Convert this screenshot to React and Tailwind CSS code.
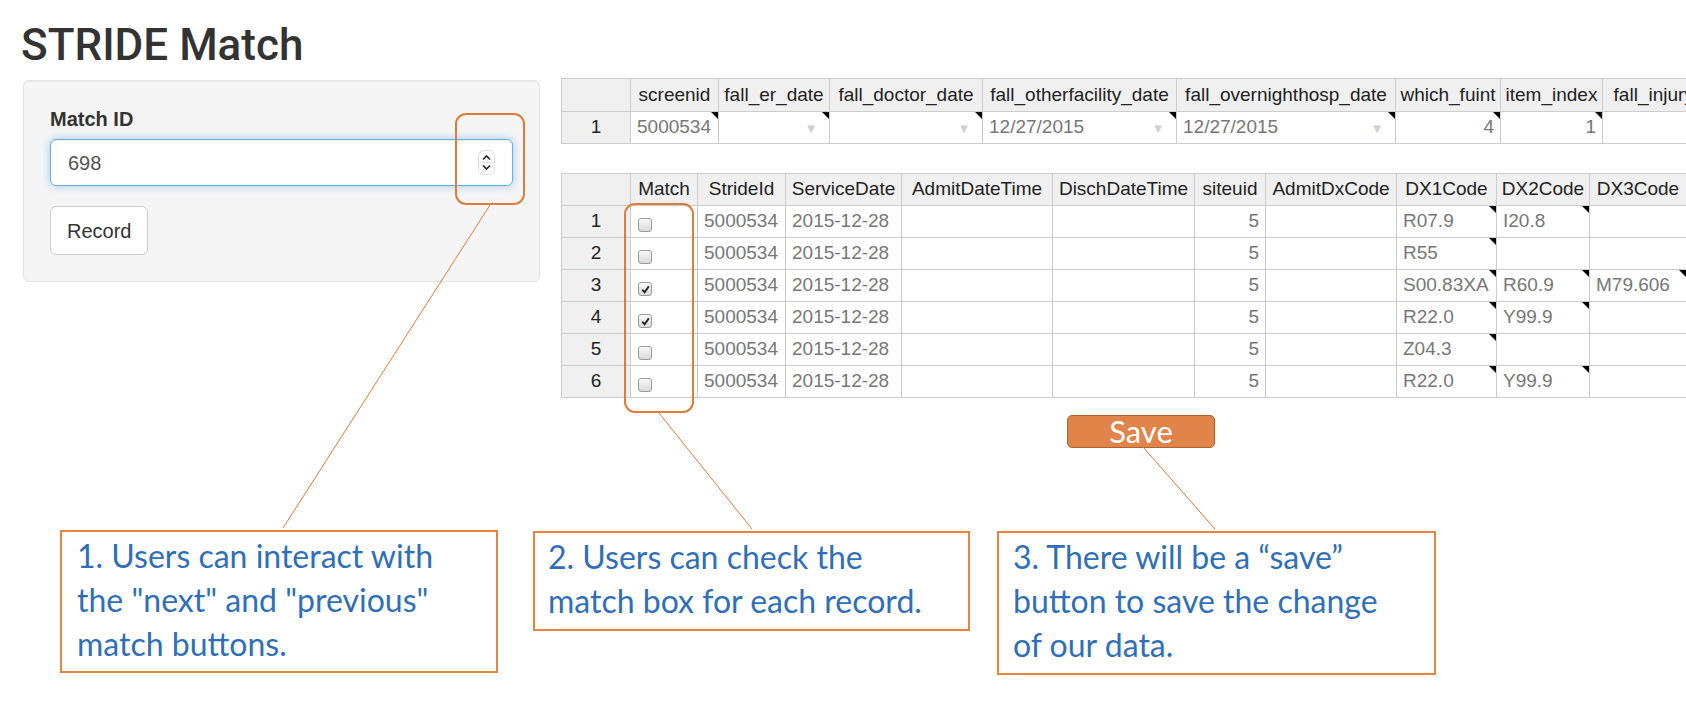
import React from "react";

const topCols = [
  { label: "", w: "w-[69px]" },
  { label: "screenid", w: "w-[88px]" },
  { label: "fall_er_date", w: "w-[111px]" },
  { label: "fall_doctor_date", w: "w-[153px]" },
  { label: "fall_otherfacility_date", w: "w-[194px]" },
  { label: "fall_overnighthosp_date", w: "w-[219px]" },
  { label: "which_fuint", w: "w-[105px]" },
  { label: "item_index", w: "w-[102px]" },
  { label: "fall_injury_date", w: "w-[150px]" },
];

const topRow = [
  { v: "5000534", comment: true },
  { v: "", comment: true, arrow: true },
  { v: "", comment: true, arrow: true },
  { v: "12/27/2015", comment: true, arrow: true },
  { v: "12/27/2015", comment: true, arrow: true },
  { v: "4", comment: true, right: true },
  { v: "1", comment: true, right: true },
  { v: "" },
];

const matchCols = [
  { label: "", w: "w-[69px]" },
  { label: "Match", w: "w-[67px]" },
  { label: "StrideId", w: "w-[88px]" },
  { label: "ServiceDate", w: "w-[116px]" },
  { label: "AdmitDateTime", w: "w-[151px]" },
  { label: "DischDateTime", w: "w-[142px]" },
  { label: "siteuid", w: "w-[71px]" },
  { label: "AdmitDxCode", w: "w-[131px]" },
  { label: "DX1Code", w: "w-[100px]" },
  { label: "DX2Code", w: "w-[93px]" },
  { label: "DX3Code", w: "w-[97px]" },
];

const records = [
  { checked: false, dx: ["R07.9", "I20.8", ""], c: [true, true, false] },
  { checked: false, dx: ["R55", "", ""], c: [true, false, false] },
  { checked: true, dx: ["S00.83XA", "R60.9", "M79.606"], c: [true, true, true] },
  { checked: true, dx: ["R22.0", "Y99.9", ""], c: [true, true, false] },
  { checked: false, dx: ["Z04.3", "", ""], c: [true, false, false] },
  { checked: false, dx: ["R22.0", "Y99.9", ""], c: [true, true, false] },
];

function HeadCell({ children }) {
  return (
    <th className="border border-[#ccc] bg-[#f0f0f0] px-[4px] text-center font-normal whitespace-nowrap text-[#222]">
      {children}
    </th>
  );
}

function RowHead({ children }) {
  return (
    <td className="border border-[#ccc] bg-[#f0f0f0] text-center text-[#222]">
      {children}
    </td>
  );
}

function Cell({ children, right, comment, arrow }) {
  return (
    <td
      className={`relative overflow-hidden border border-[#ccc] bg-white px-[6px] whitespace-nowrap text-[#777] ${
        right ? "text-right" : "text-left"
      }`}
    >
      {children}
      {arrow && (
        <span className="absolute top-1/2 right-[14px] -translate-y-1/2 font-['DejaVu_Sans',sans-serif] text-[10px] text-[#cfcfcf]">
          ▼
        </span>
      )}
      {comment && (
        <span className="absolute top-0 right-0 h-0 w-0 border-t-[7px] border-l-[7px] border-t-black border-l-transparent" />
      )}
    </td>
  );
}

function Check({ checked }) {
  return (
    <span className="relative top-[3px] left-[1px] inline-flex h-[14px] w-[14px] items-center justify-center rounded-[3px] border border-[#9d9d9d] bg-linear-to-b from-[#fafafa] to-[#d9d9d9] align-middle">
      {checked && (
        <svg viewBox="0 0 12 12" className="h-[11px] w-[11px]">
          <path d="M2.5 6.2 L5 9 L9.6 2.6" fill="none" stroke="#1f1f1f" strokeWidth="2" />
        </svg>
      )}
    </span>
  );
}

function Spinner() {
  return (
    <svg width="17" height="25" viewBox="0 0 17 25" className="ml-auto">
      <rect x="0.5" y="0.5" width="16" height="24" rx="5" fill="#fbfbfb" stroke="#dedede" />
      <line x1="1" y1="12.5" x2="16" y2="12.5" stroke="#e6e6e6" />
      <path d="M5 9.5 L8.5 6 L12 9.5" fill="none" stroke="#2b2b2b" strokeWidth="1.7" />
      <path d="M5 15.5 L8.5 19 L12 15.5" fill="none" stroke="#2b2b2b" strokeWidth="1.7" />
    </svg>
  );
}

export default function App() {
  return (
    <div className="relative h-[726px] w-[1686px] overflow-hidden bg-white pt-[22px] pl-[22px] font-['Liberation_Sans',Arial,sans-serif]">
      <h2 className="-ml-[1px] h-[46px] font-['Roboto',sans-serif] text-[44px] leading-[46px] font-medium text-[#333]">
        STRIDE Match
      </h2>

      <div className="mt-[10px] flex items-start">
        {/* sidebar well */}
        <div className="mt-[2px] ml-[1px] w-[517px] shrink-0 rounded-[6px] border border-[#e3e3e3] bg-[#f5f5f5] p-[26px] shadow-[inset_0_1px_1px_rgba(0,0,0,0.05)]">
          <label className="block text-[20px] leading-[25px] font-bold text-[#333]">
            Match ID
          </label>
          <div className="mt-[7px] flex h-[47px] items-center rounded-[6px] border border-[#66afe9] bg-white pr-[17px] pl-[17px] text-[20px] text-[#555] shadow-[inset_0_1px_1px_rgba(0,0,0,0.075),0_0_8px_rgba(102,175,233,0.6)]">
            <span>698</span>
            <Spinner />
          </div>
          <button className="mt-[20px] h-[49px] rounded-[6px] border border-[#ccc] bg-white px-[16px] text-[20px] text-[#333]">
            Record
          </button>
        </div>

        {/* tables */}
        <div className="ml-[21px] min-w-0 flex-1 text-[19px]">
          <div className="overflow-hidden">
            <table className="w-[1191px] table-fixed border-collapse">
              <colgroup>
                {topCols.map((c, i) => (
                  <col key={i} className={c.w} />
                ))}
              </colgroup>
              <thead>
                <tr className="h-[33px]">
                  {topCols.map((c, i) => (
                    <HeadCell key={i}>{c.label}</HeadCell>
                  ))}
                </tr>
              </thead>
              <tbody>
                <tr className="h-[32px]">
                  <RowHead>1</RowHead>
                  {topRow.map((c, i) => (
                    <Cell key={i} right={c.right} comment={c.comment} arrow={c.arrow}>
                      {c.v}
                    </Cell>
                  ))}
                </tr>
              </tbody>
            </table>
          </div>

          <div className="mt-[29px] overflow-hidden">
            <table className="w-[1125px] table-fixed border-collapse">
              <colgroup>
                {matchCols.map((c, i) => (
                  <col key={i} className={c.w} />
                ))}
              </colgroup>
              <thead>
                <tr className="h-[32px]">
                  {matchCols.map((c, i) => (
                    <HeadCell key={i}>{c.label}</HeadCell>
                  ))}
                </tr>
              </thead>
              <tbody>
                {records.map((r, i) => (
                  <tr key={i} className="h-[32px]">
                    <RowHead>{i + 1}</RowHead>
                    <td className="border border-[#ccc] bg-white px-[6px]">
                      <Check checked={r.checked} />
                    </td>
                    <Cell>5000534</Cell>
                    <Cell>2015-12-28</Cell>
                    <Cell />
                    <Cell />
                    <Cell right>5</Cell>
                    <Cell />
                    <Cell comment={r.c[0]}>{r.dx[0]}</Cell>
                    <Cell comment={r.c[1]}>{r.dx[1]}</Cell>
                    <Cell comment={r.c[2]}>{r.dx[2]}</Cell>
                  </tr>
                ))}
              </tbody>
            </table>
          </div>

          <button className="mt-[17px] ml-[506px] flex h-[33px] w-[148px] items-center justify-center rounded-[5px] border-[1.5px] border-[#b0612c] bg-[#e0844a] font-['Lato',sans-serif] text-[31px] leading-none text-white">
            Save
          </button>
        </div>
      </div>

      {/* callout boxes */}
      <div className="mt-[82px] flex items-start font-['Lato',sans-serif] text-[32px] leading-[44px] text-[#2f6fba]">
        <div className="ml-[38px] h-[143px] w-[438px] border-2 border-[#e8843f] bg-white pt-[2px] pl-[15px]">
          1. Users can interact with
          <br />
          the "next" and "previous"
          <br />
          match buttons.
        </div>
        <div className="mt-[1px] ml-[35px] h-[100px] w-[437px] border-2 border-[#e8843f] bg-white pt-[2px] pl-[13px]">
          2. Users can check the
          <br />
          match box for each record.
        </div>
        <div className="mt-[1px] ml-[27px] h-[144px] w-[439px] border-2 border-[#e8843f] bg-white pt-[2px] pl-[14px]">
          3. There will be a “save”
          <br />
          button to save the change
          <br />
          of our data.
        </div>
      </div>

      {/* annotation outlines and leader lines */}
      <svg className="pointer-events-none absolute top-0 left-0" width="1686" height="726">
        <rect x="456" y="114" width="68" height="90" rx="10" fill="none" stroke="#e07b39" strokeWidth="2" />
        <rect x="625" y="204" width="68" height="208" rx="10" fill="none" stroke="#e07b39" strokeWidth="2" />
        <line x1="490" y1="205" x2="283" y2="528" stroke="#e07b39" strokeWidth="1" />
        <line x1="659" y1="413" x2="752" y2="529" stroke="#e07b39" strokeWidth="1" />
        <line x1="1143" y1="447" x2="1215" y2="529" stroke="#e07b39" strokeWidth="1" />
      </svg>
    </div>
  );
}
